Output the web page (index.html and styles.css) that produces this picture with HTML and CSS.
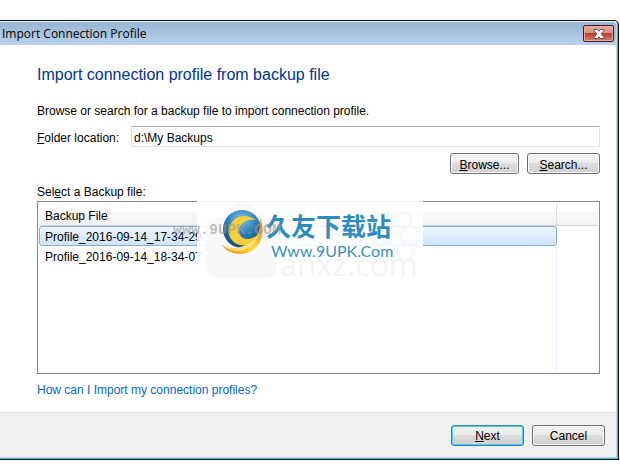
FILE: index.html
```html
<!DOCTYPE html>
<html lang="en">
<head>
<meta charset="utf-8">
<title>Import Connection Profile</title>
<link rel="stylesheet" href="styles.css">
</head>
<body>
<main class="dialog">
  <header class="titlebar">
    <span class="caption">Import Connection Profile</span>
    <button class="close" type="button" aria-label="Close">
      <svg width="12" height="10" viewBox="0 0 12 10"><path d="M1 .5h3.500L6 2.300 7.500.5H11v1L8.300 5 11 8.500v1H7.500L6 7.700 4.500 9.500H1v-1L3.700 5 1 1.500z" fill="#f5f5f5" stroke="#555b6b"/></svg>
    </button>
  </header>
  <section class="content">
    <h1>Import connection profile from backup file</h1>
    <p class="intro">Browse or search for a backup file to import connection profile.</p>
    <div class="folder">
      <label for="folder"><u>F</u>older location:</label>
      <input id="folder" type="text" value="d:\My Backups">
    </div>
    <div class="actions">
      <button class="btn browse" type="button"><u>B</u>rowse...</button>
      <button class="btn" type="button"><u>S</u>earch...</button>
    </div>
    <p class="list-label" id="list-label">Sel<u>e</u>ct a Backup file:</p>
    <div class="list">
      <table aria-labelledby="list-label">
        <thead><tr><th>Backup File</th><th class="rest"></th></tr></thead>
        <tbody>
          <tr><td class="selected">Profile_2016-09-14_17-34-29</td><td></td></tr>
          <tr><td>Profile_2016-09-14_18-34-07</td><td></td></tr>
          <tr class="filler"><td></td><td></td></tr>
        </tbody>
      </table>
      <div class="watermark">
        <svg class="bag" width="78" height="86" viewBox="0 0 78 86"><path d="M24 24V18a13 12 0 0 1 26 0v6" fill="none" stroke="#f8f8f8" stroke-width="5"/><rect x="1" y="19" width="70" height="60" rx="9" fill="#f8f8f8"/></svg>
        <svg class="flower" width="50" height="60" viewBox="0 0 50 60" fill="none" stroke="#f5f6f7" stroke-width="2"><circle cx="13" cy="13" r="9"/><circle cx="32" cy="11" r="8"/><circle cx="39" cy="27" r="9"/><circle cx="34" cy="43" r="8"/><circle cx="16" cy="43" r="9"/><circle cx="8" cy="28" r="8"/></svg>
        <span class="ghost">anxz.com</span>
        <svg class="globe" width="44" height="48" viewBox="0 0 44 48">
          <defs>
            <radialGradient id="ball" cx=".5" cy=".25" r=".7"><stop offset="0" stop-color="#7fc4e8"/><stop offset=".5" stop-color="#3184bd"/><stop offset="1" stop-color="#155083"/></radialGradient>
            <linearGradient id="gold" x1="0" y1="1" x2="1" y2="0"><stop offset="0" stop-color="#e88b1c"/><stop offset=".45" stop-color="#fbd83c"/><stop offset="1" stop-color="#df8a1c"/></linearGradient>
          </defs>
          <circle cx="21" cy="21" r="19" fill="url(#ball)"/>
          <path d="M35 12C24 4 11 9 8 20c-2 11 7 19 17 17 6-1 9-5 10-9-6 4-13 4-16-1C15 19 23 10 35 12z" fill="#f7cf38"/>
          <path d="M39 9c8 20-3 37-20 37C11 46 4 42 1 37c7 4 14 4 21 1 12-4 19-14 17-29z" fill="url(#gold)"/>
          <path d="M1 37c7 4 15 4 22 1 7-2 12-7 14-13-1 9-7 15-15 17-8 2-16 0-21-5z" fill="#fff09a" opacity=".7"/>
        </svg>
        <span class="brand" lang="zh">久友下载站</span>
        <span class="url">Www.9UPK.Com</span>
        <span class="stamp">www.9UPK.COM</span>
      </div>
    </div>
    <a class="help" href="#help">How can I Import my connection profiles?</a>
  </section>
  <footer class="footer">
    <button class="btn next" type="button"><u>N</u>ext</button>
    <button class="btn" type="button">Cancel</button>
  </footer>
</main>
</body>
</html>
```

FILE: styles.css
```css
* { box-sizing: border-box; }
body {
  margin: 0;
  padding: 20px 1px 6px 0;
  min-height: 100vh;
  display: flex;
  background: #fff;
  color: #000;
  font: 12px/16px "Liberation Sans", sans-serif;
}
.dialog {
  flex: 1;
  display: flex;
  flex-direction: column;
  border: solid #111;
  border-width: 1px 1px 1px 0;
  border-radius: 0 5px 0 0;
  box-shadow: inset -1px -1px #37c3e6, inset -2px -2px #bdd4e8;
  padding: 0 2px 2px 0;
}
.titlebar {
  height: 24px;
  display: flex;
  align-items: center;
  justify-content: space-between;
  padding: 0 2px 0 2px;
  border-top: 1px solid #e8f6fc;
  border-radius: 0 4px 0 0;
  background: linear-gradient(#98b4d2, #b9d1eb);
  font: 12px/16px "Open Sans", sans-serif;
}
.close {
  width: 31px;
  height: 17px;
  padding: 0;
  display: grid;
  place-items: center;
  border: 1px solid #45192a;
  border-radius: 2px;
  background: linear-gradient(#e9a99f, #d98d80 45%, #b8402c 50%, #d78168);
  box-shadow: inset 0 0 0 1px #e8aaa0;
}
.content {
  flex: 1;
  display: flex;
  flex-direction: column;
  padding: 20px 16px 14px 37px;
}
h1 {
  margin: 0;
  color: #039;
  font-size: 16px;
  line-height: 20px;
  font-weight: 400;
}
p { margin: 0; }
.intro { margin-top: 18px; }
.folder {
  display: flex;
  align-items: center;
  gap: 8px;
  margin-top: 7px;
}
.folder label { width: 86px; white-space: nowrap; padding-top: 2px; }
.folder input {
  flex: 1;
  min-width: 0;
  height: 21px;
  padding: 2px 2px 0;
  border: 1px solid #e2e3ea;
  border-top-color: #abadb3;
  border-radius: 1px;
  background: #fff;
  font: inherit;
  color: inherit;
}
.actions {
  display: flex;
  justify-content: flex-end;
  gap: 8px;
  margin-top: 6px;
}
.btn {
  width: 73px;
  height: 21px;
  padding: 2px 0 0;
  border: 1px solid #707070;
  border-radius: 3px;
  background: linear-gradient(#f2f2f2, #ebebeb 49%, #dddddd 50%, #cfcfcf);
  box-shadow: inset 0 0 0 1px #fcfcfc;
  font: inherit;
  color: inherit;
}
.browse { width: 69px; }
.list-label { margin-top: 10px; }
.list {
  position: relative;
  flex: 1;
  display: flex;
  margin-top: 1px;
  padding: 1px;
  border: 1px solid #828790;
}
table {
  width: 100%;
  height: 100%;
  border-collapse: separate;
  border-spacing: 0;
}
th {
  height: 23px;
  padding: 4px 6px 0;
  text-align: left;
  font-weight: 400;
  border-bottom: 1px solid #d5d5d5;
  border-right: 1px solid #dfdfdf;
  background: linear-gradient(#fff 40%, #f6f7f8 41%, #f1f2f4);
}
.rest { width: 41px; border-right: 0; }
td {
  height: 19px;
  padding: 2px 6px 0;
  border-right: 1px solid #e5f0fd;
}
td:last-child { border-right: 0; }
.selected {
  height: 20px;
  padding: 2px 5px 0;
  border: 1px solid #84acdd;
  border-radius: 3px;
  background: linear-gradient(#edf5ff, #cfe4ff);
}
.filler td { height: auto; }
.help { margin-top: 8px; color: #06c; text-decoration: none; align-self: flex-start; }
.footer {
  height: 45px;
  display: flex;
  justify-content: flex-end;
  align-items: center;
  gap: 8px;
  padding: 0 11px 0 0;
  border-top: 1px solid #dfdfdf;
  background: #f0f0f0;
}
.next { border-color: #3c7fb1; box-shadow: inset 0 0 0 1px #48d0f5; }

/* Site mark laid over the list */
.watermark {
  position: absolute;
  left: 159px;
  top: -2px;
  width: 226px;
  height: 80px;
  background: rgba(255, 255, 255, .88);
}
.watermark > * { position: absolute; white-space: nowrap; }
.bag { left: 8px; top: -1px; }
.flower { left: 174px; top: 9px; }
.ghost { left: 83px; top: 46px; color: #f4f4f4; font: 31px/36px "Open Sans", sans-serif; }
.globe { left: 24px; top: 8px; }
.brand { left: 69px; top: 8px; color: #2e8bc0; font: 700 25px/34px "Noto Sans CJK SC", sans-serif; }
.url { left: 74px; top: 40px; color: #3b8fc0; font: 16px/22px Lato, sans-serif; }
.stamp { left: -24px; top: 22px; color: rgba(150, 150, 150, .6); font: 700 15px/18px "Liberation Mono", monospace; }
```
